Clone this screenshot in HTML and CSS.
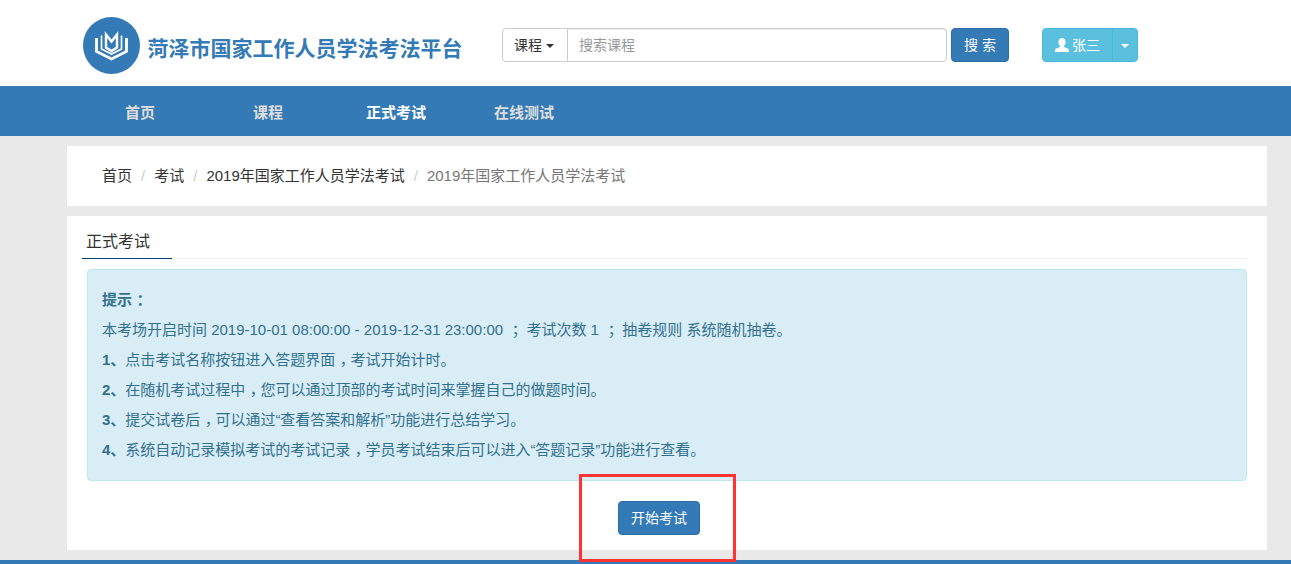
FILE: index.html
```html
<!DOCTYPE html>
<html lang="zh">
<head>
<meta charset="utf-8">
<title>菏泽市国家工作人员学法考法平台</title>
<link rel="stylesheet" href="styles.css">
</head>
<body>
<header class="topbar">
  <div class="brand">
    <span class="logo">
      <svg width="57" height="57" viewBox="0 0 57 57">
        <circle cx="28.5" cy="28.5" r="28.5" fill="#337ab7"/>
        <path d="M13.500 21v13.500l15 7.500 15-7.500V21" fill="none" stroke="#fff" stroke-width="2.800"/>
        <path d="M18.500 18.500v13.500l10 5 10-5V18.500" fill="none" stroke="#fff" stroke-width="1.600"/>
        <path d="M23 17.500l5.500 7 5.500-7v13l-5.500 3.500-5.500-3.500z" fill="none" stroke="#fff" stroke-width="2.400"/>
      </svg>
    </span>
    <span class="brand-name">菏泽市国家工作人员学法考法平台</span>
  </div>
  <div class="search">
    <div class="search-group">
      <button class="search-type">课程<i class="caret caret-dark"></i></button>
      <input class="search-input" type="text" placeholder="搜索课程">
    </div>
    <button class="btn-primary btn-search">搜 索</button>
  </div>
  <div class="user">
    <button class="user-main">
      <svg class="user-icon" width="14" height="14" viewBox="0 0 14 14"><path d="M7 0c2.200 0 3.600 1.700 3.600 4 0 1.600-.7 3-1.500 3.800-.3.300-.3 1 0 1.300.9.700 4.400 1.200 4.900 2.900v2H0v-2c.5-1.700 4-2.200 4.900-2.900.3-.3.300-1 0-1.300C4.100 7 3.400 5.600 3.400 4 3.400 1.700 4.800 0 7 0z" fill="#fff"/></svg>张三
    </button>
    <button class="user-toggle"><i class="caret caret-light"></i></button>
  </div>
</header>
<nav class="mainnav">
  <a class="nav-item">首页</a>
  <a class="nav-item">课程</a>
  <a class="nav-item active">正式考试</a>
  <a class="nav-item">在线测试</a>
</nav>
<main class="content">
  <ol class="breadcrumb card">
    <li>首页</li>
    <li>考试</li>
    <li>2019年国家工作人员学法考试</li>
    <li class="current">2019年国家工作人员学法考试</li>
  </ol>
  <section class="panel card">
    <div class="tabs"><span class="tab">正式考试</span></div>
    <div class="alert">
      <p><b>提示<span class="pn">：</span></b></p>
      <p>本考场开启时间 2019-10-01 08:00:00 - 2019-12-31 23:00:00 <span class="pn">；</span> 考试次数 1 <span class="pn">；</span> 抽卷规则 系统随机抽卷。</p>
      <p><b>1、</b>点击考试名称按钮进入答题界面<span class="pn">，</span>考试开始计时。</p>
      <p><b>2、</b>在随机考试过程中<span class="pn">，</span>您可以通过顶部的考试时间来掌握自己的做题时间。</p>
      <p><b>3、</b>提交试卷后<span class="pn">，</span>可以通过“查看答案和解析”功能进行总结学习。</p>
      <p><b>4、</b>系统自动记录模拟考试的考试记录<span class="pn">，</span>学员考试结束后可以进入“答题记录”功能进行查看。</p>
    </div>
    <div class="actions"><button class="btn-primary btn-start">开始考试</button></div>
  </section>
</main>
<footer class="footer"></footer>
<div class="annotation"></div>
</body>
</html>
```
FILE: styles.css
```css
* { box-sizing: border-box; }
html, body { margin: 0; padding: 0; height: 564px; overflow: hidden; }
body {
  background: #e9e9e9;
  color: #333;
  font: 14px/20px "Liberation Sans", "Noto Sans CJK SC", sans-serif;
  position: relative;
}
button { font: inherit; cursor: pointer; }

.topbar { height: 86px; background: #fff; display: flex; align-items: flex-start; padding-left: 83px; }
.brand { display: flex; width: 419px; padding-top: 17px; }
.logo { width: 57px; height: 57px; display: block; }
.brand-name { margin: 16px 0 0 7.5px; font-size: 21px; line-height: 32px; font-weight: 700; color: #337ab7; white-space: nowrap; }

.search { display: flex; gap: 4px; padding-top: 28px; width: 540px; }
.search-group { display: flex; width: 445px; height: 34px; }
.search-type {
  width: 66px; height: 34px; padding: 0 2px 0 0; background: #fff; color: #333;
  border: 1px solid #ccc; border-radius: 4px 0 0 4px;
}
.search-input {
  flex: 1; min-width: 0; height: 34px; margin-left: -1px; padding: 6px 11px;
  font: inherit; color: #555; background: #fff;
  border: 1px solid #ccc; border-radius: 0 4px 4px 0;
  box-shadow: inset 0 1px 1px rgba(0,0,0,.075); outline: 0;
}
.search-input::placeholder { color: #999; }

.caret { display: inline-block; width: 0; height: 0; margin-left: 4px; vertical-align: middle; border-top: 4px solid; border-left: 4px solid transparent; border-right: 4px solid transparent; }
.caret-dark { color: #333; }
.caret-light { color: #fff; margin: 0; }

.btn-primary { background: #337ab7; color: #fff; border: 1px solid #2e6da4; border-radius: 4px; padding: 0; }
.btn-search { width: 58px; height: 34px; }

.user { display: flex; height: 34px; margin-top: 28px; }
.user-main, .user-toggle { height: 34px; background: #5bc0de; color: #fff; border: 1px solid #46b8da; padding: 0; }
.user-main { width: 71px; border-radius: 4px 0 0 4px; display: flex; align-items: center; justify-content: center; gap: 3px; }
.user-toggle { width: 26px; margin-left: -1px; border-radius: 0 4px 4px 0; }

.mainnav { height: 50px; background: #337ab7; display: flex; padding-left: 76px; }
.nav-item { width: 128px; text-align: center; color: #ddd; font-size: 15px; font-weight: 700; line-height: 54px; }
.nav-item.active { color: #fff; }

.content { width: 1200px; margin-left: 67px; padding-top: 10px; display: flex; flex-direction: column; gap: 10px; }
.card { background: #fff; }

.breadcrumb { height: 60px; margin: 0; padding: 20px 35px; list-style: none; display: flex; font-size: 15px; }
.breadcrumb li { white-space: nowrap; color: #333; }
.breadcrumb li + li::before { content: "/"; color: #ccc; padding: 0 9px; }
.breadcrumb li.current { color: #777; }

.panel { height: 334px; padding: 0 20px 0 15px; }
.tabs { height: 43px; border-bottom: 1px solid #eee; }
.tab {
  display: block; width: 90px; height: 43px; padding: 14px 4px 0;
  font-size: 16px; line-height: 24px; color: #333; border-bottom: 1px solid #003f7f;
}
.alert {
  margin: 10px 0 0 5px; padding: 15px 14px; height: 212px; font-size: 15px;
  color: #31708f; background: #d9edf7; border: 1px solid #bce8f1; border-radius: 4px;
}
.alert p { margin: 0; line-height: 30px; white-space: nowrap; }
.pn { padding-left: .3em; letter-spacing: -.3em; }
.actions { display: flex; justify-content: center; padding-top: 20px; padding-right: 11px; }
.btn-start { width: 82px; height: 34px; font-size: 14px; font-weight: 400; }

.footer { height: 4px; margin-top: 10px; background: #337ab7; }
.annotation { position: absolute; left: 579px; top: 474px; width: 157px; height: 88px; border: 3px solid #f33; }
```
